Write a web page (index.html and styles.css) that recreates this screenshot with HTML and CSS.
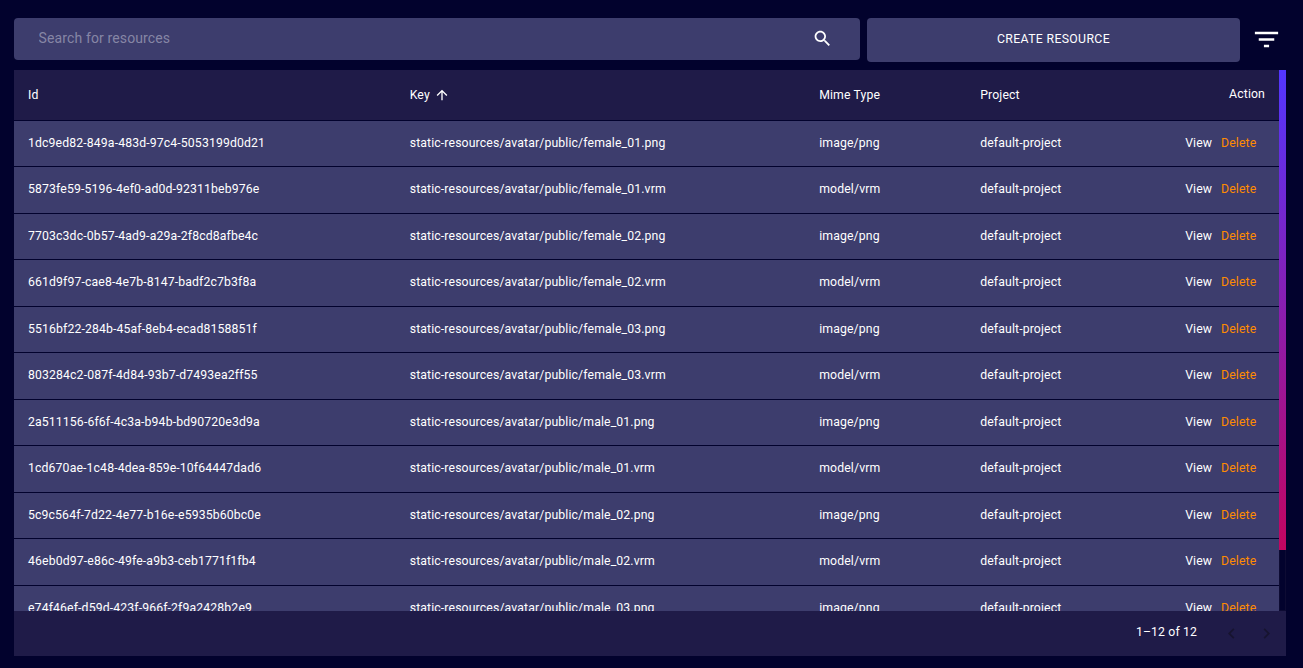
FILE: index.html
```html
<!DOCTYPE html>
<html lang="en">
<head>
<meta charset="utf-8">
<title>Resources</title>
<link rel="stylesheet" href="styles.css">
</head>
<body>
<div class="toolbar">
  <div class="search">
    <input class="search-input" type="text" placeholder="Search for resources">
    <svg class="search-icon" viewBox="0 0 24 24"><path d="M15.5 14h-.79l-.28-.27C15.41 12.59 16 11.11 16 9.5 16 5.91 13.09 3 9.5 3S3 5.91 3 9.5 5.91 16 9.5 16c1.61 0 3.09-.59 4.23-1.57l.27.28v.79l5 4.99L20.49 19l-4.99-5zm-6 0C7.01 14 5 11.99 5 9.5S7.01 5 9.5 5 14 7.01 14 9.5 11.99 14 9.5 14z"/></svg>
  </div>
  <button class="create">CREATE RESOURCE</button>
  <svg class="filter-icon" viewBox="0 0 24 24"><path d="M10 18h4v-2h-4v2zM3 6v2h18V6H3zm3 7h12v-2H6v2z"/></svg>
</div>
<main class="panel">
  <div class="viewport">
    <div class="table" id="table">
      <div class="row head">
        <span>Id</span>
        <span class="sorted">Key <svg class="sort-icon" viewBox="0 0 24 24"><path d="M4 12l1.41 1.41L11 7.83V20h2V7.83l5.58 5.59L20 12l-8-8-8 8z"/></svg></span>
        <span>Mime Type</span><span>Project</span><span class="action-title">Action</span>
      </div>
    </div>
    <div class="scrollbar"><div class="thumb"></div></div>
  </div>
  <footer class="pagination">
    <span class="count">1–12 of 12</span>
    <svg class="page-icon" viewBox="0 0 24 24"><path d="M15.41 16.59L10.83 12l4.58-4.59L14 6l-6 6 6 6 1.41-1.41z"/></svg>
    <svg class="page-icon" viewBox="0 0 24 24"><path d="M8.59 16.59L13.17 12 8.59 7.41 10 6l6 6-6 6-1.41-1.41z"/></svg>
  </footer>
</main>
<script src="script.js"></script>
</body>
</html>
```
FILE: styles.css
```css
* { box-sizing: border-box; }
body {
  margin: 0;
  height: 668px;
  padding: 18px 17px 12px 14px;
  overflow: hidden;
  background: #02022d;
  color: #fff;
  font-family: Roboto, sans-serif;
  font-size: 12.25px;
}
.toolbar { display: flex; align-items: flex-start; height: 52px; }
.search {
  display: flex;
  align-items: center;
  width: 846px;
  height: 42px;
  padding: 0 27px 2px 24.5px;
  border-radius: 4px;
  background: #3d3d6d;
}
.search-input {
  flex: 1;
  padding: 0;
  border: 0;
  outline: 0;
  background: none;
  color: #fff;
  font: 14px Roboto, sans-serif;
  letter-spacing: 0.13px;
}
.search-input::placeholder { color: #8686a5; opacity: 1; }
.search-icon { width: 21px; height: 21px; fill: #fff; }
.create {
  width: 373px;
  height: 44px;
  margin-left: 7px;
  padding: 0 0 2px;
  border: 0;
  border-radius: 4px;
  background: #3d3d6d;
  color: #fff;
  font: 12.25px Roboto, sans-serif;
  letter-spacing: 0.35px;
}
.filter-icon { width: 31px; height: 31px; margin: 6px 0 0 11px; fill: #fff; }
.panel { width: 1272px; }
.viewport { display: flex; height: 541px; overflow: hidden; }
.table { width: 1265px; }
.row {
  display: grid;
  grid-template-columns: 381.7px 409.5px 161px 205px 1fr;
  height: 46.5px;
  padding: 14px 0 0 14px;
  border-bottom: 1px solid #02022d;
  background: #3d3d6d;
  line-height: 17.5px;
  letter-spacing: 0.129px;
  white-space: nowrap;
}
.head { height: 50.9px; padding-top: 17px; background: #1f1b48; }
.sorted { display: flex; align-items: center; height: 17.5px; }
.sort-icon { width: 16px; height: 16px; margin: 0 0 2px 4px; fill: #fff; }
.action-title { padding-right: 14px; text-align: right; line-height: 15.5px; }
.delete { margin-left: 8.8px; color: #ff8c00; }
.scrollbar { width: 7px; background: #02022d; border: solid #0d0b33; border-width: 0 1px 1px; }
.thumb { height: 480px; margin: 0 -1px; background: linear-gradient(#5236ff, #c20560); }
.pagination { display: flex; align-items: center; justify-content: flex-end; height: 45px; background: #1f1b48; padding-right: 9px; }
.count { margin: 0 24px 4px 0; letter-spacing: 0.131px; }
.page-icon { width: 21px; height: 21px; margin: 0 0 1px 14px; fill: #17142f; }
.count + .page-icon { margin-left: 0; }
```
FILE: script.js
```js
const resources = [
  ['1dc9ed82-849a-483d-97c4-5053199d0d21', 'female_01.png'],
  ['5873fe59-5196-4ef0-ad0d-92311beb976e', 'female_01.vrm'],
  ['7703c3dc-0b57-4ad9-a29a-2f8cd8afbe4c', 'female_02.png'],
  ['661d9f97-cae8-4e7b-8147-badf2c7b3f8a', 'female_02.vrm'],
  ['5516bf22-284b-45af-8eb4-ecad8158851f', 'female_03.png'],
  ['803284c2-087f-4d84-93b7-d7493ea2ff55', 'female_03.vrm'],
  ['2a511156-6f6f-4c3a-b94b-bd90720e3d9a', 'male_01.png'],
  ['1cd670ae-1c48-4dea-859e-10f64447dad6', 'male_01.vrm'],
  ['5c9c564f-7d22-4e77-b16e-e5935b60bc0e', 'male_02.png'],
  ['46eb0d97-e86c-49fe-a9b3-ceb1771f1fb4', 'male_02.vrm'],
  ['e74f46ef-d59d-423f-966f-2f9a2428b2e9', 'male_03.png']
];
document.getElementById('table').insertAdjacentHTML('beforeend', resources.map(([id, file]) => `
  <div class="row">
    <span>${id}</span>
    <span>static-resources/avatar/public/${file}</span>
    <span>${file.endsWith('png') ? 'image/png' : 'model/vrm'}</span>
    <span>default-project</span>
    <span><span class="view">View</span><span class="delete">Delete</span></span>
  </div>`).join(''));
```
